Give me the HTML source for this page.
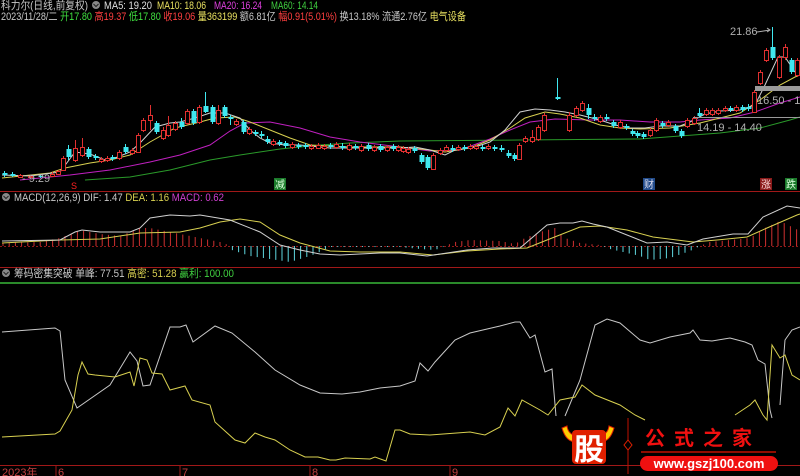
<!DOCTYPE html>
<html><head><meta charset="utf-8"><style>
html,body{margin:0;padding:0;background:#000;width:800px;height:476px;overflow:hidden}
svg{display:block}
text{font-family:"Liberation Sans","Noto Sans CJK SC",sans-serif}
</style></head><body>
<svg id="s" width="800" height="476" viewBox="0 0 800 476" xmlns="http://www.w3.org/2000/svg">
<rect width="800" height="476" fill="#000"/>
<!-- header -->
<g font-size="11">
<text x="1" y="9" fill="#c8c8c8" textLength="87" lengthAdjust="spacingAndGlyphs">科力尔(日线,前复权)</text>
<circle cx="96" cy="5" r="4" fill="#888"/><path d="M93.5 4l2.5 2.5 2.5-2.5" stroke="#222" fill="none"/>
<text x="104" y="9" fill="#e0e0e0" textLength="48" lengthAdjust="spacingAndGlyphs">MA5: 19.20</text>
<text x="157" y="9" fill="#e8e060" textLength="49" lengthAdjust="spacingAndGlyphs">MA10: 18.06</text>
<text x="214" y="9" fill="#e040e0" textLength="48" lengthAdjust="spacingAndGlyphs">MA20: 16.24</text>
<text x="271" y="9" fill="#40d040" textLength="47" lengthAdjust="spacingAndGlyphs">MA60: 14.14</text>
<text x="1" y="20" fill="#c8c8c8" textLength="465" lengthAdjust="spacingAndGlyphs">2023/11/28/二 <tspan fill="#40e040">开17.80 </tspan><tspan fill="#ff4040">高19.37 </tspan><tspan fill="#40e040">低17.80 </tspan><tspan fill="#ff4040">收19.06 </tspan><tspan fill="#e8e060">量363199 </tspan><tspan fill="#c8c8c8">额6.81亿 </tspan><tspan fill="#ff4040">幅0.91(5.01%) </tspan><tspan fill="#c8c8c8">换13.18% 流通2.76亿 </tspan><tspan fill="#e8e060">电气设备</tspan></text>
</g>
<!-- dividers -->
<line x1="0" y1="191.5" x2="800" y2="191.5" stroke="#a01818"/>
<line x1="0" y1="267.5" x2="800" y2="267.5" stroke="#a01818"/>
<line x1="0" y1="465.5" x2="800" y2="465.5" stroke="#a01818"/>
<line x1="0" y1="246.5" x2="800" y2="246.5" stroke="#901818" stroke-dasharray="2,2"/>
<line x1="0" y1="283" x2="800" y2="283" stroke="#2a8a2a" stroke-width="2"/>
<!-- MA lines -->
<g fill="none" stroke-width="1">
<polyline stroke="#2a9a2a" points="85,180 130,177 170,170 210,160 240,155 280,149 320,145 350,143 400,141 520,140 640,139 720,133 760,128 790,120 800,117"/>
<polyline stroke="#c020c0" points="20,180 40,178 70,175 110,170 150,162 180,155 210,145 230,131 245,123 270,122 300,128 330,137 360,142 400,147 430,151 460,150 490,139 510,130 530,122 555,119 590,120 620,120 650,122 680,122 700,120 730,118 755,112 780,103 800,97"/>
<polyline stroke="#d8d050" points="2,178 50,173 65,168 90,163 110,160 130,155 150,142 175,128 200,122 215,118 235,117 250,122 270,130 290,138 310,145 350,147 400,147 430,150 445,152 470,148 490,140 510,128 525,118 545,112 560,114 580,118 600,125 620,128 640,129 670,128 700,123 720,118 740,113 760,100 780,85 795,77 800,75"/>
<polyline stroke="#d0d0d0" points="2,175 30,176 60,172 75,152 90,154 105,160 115,158 130,152 140,143 155,127 170,123 180,122 195,118 210,113 225,113 240,118 250,130 260,138 270,143 285,145 300,145 330,148 350,148 400,148 415,147 430,150 445,155 455,150 475,147 490,142 505,130 520,112 535,109 550,110 565,112 580,115 600,120 615,125 630,128 645,128 660,126 680,126 690,122 705,114 720,111 740,110 755,105 765,85 778,57 785,57 795,72 800,75"/>
</g>
<g id="candles"></g>
<!-- annotations -->
<rect x="755" y="86" width="45" height="5" fill="#9a9a9a"/>
<line x1="693" y1="117.5" x2="800" y2="117.5" stroke="#9a9a9a"/>
<g font-size="11" fill="#b0b0b0">
<text x="730" y="35">21.86</text>
<text x="757" y="104">16.50 - 17</text>
<text x="697" y="131">14.19 - 14.40</text>
<text x="22" y="182">- 9.29</text>
</g>
<path d="M757 32 L770 30" stroke="#b0b0b0"/><path d="M767 28l3 2-3 2" stroke="#b0b0b0" fill="none"/>
<text x="71" y="189" font-size="9" fill="#ff2020">S</text>
<rect x="274" y="178" width="12" height="12" fill="#1a7a2a"/><text x="275" y="188" font-size="10" fill="#dfd">减</text>
<rect x="643" y="178" width="12" height="12" fill="#204a8a"/><text x="644" y="188" font-size="10" fill="#dde">财</text>
<rect x="760" y="178" width="12" height="12" fill="#8a1a1a"/><text x="761" y="188" font-size="10" fill="#fdd">涨</text>
<rect x="785" y="178" width="12" height="12" fill="#1a7a2a"/><text x="786" y="188" font-size="10" fill="#dfd">跌</text>
<!-- MACD header -->
<circle cx="6" cy="197" r="4" fill="#888"/><path d="M3.5 196l2.5 2.5 2.5-2.5" stroke="#222" fill="none"/>
<text x="14" y="201" font-size="11" fill="#c8c8c8" textLength="210" lengthAdjust="spacingAndGlyphs">MACD(12,26,9) DIF: 1.47 <tspan fill="#d8d050">DEA: 1.16 </tspan><tspan fill="#d040d0">MACD: 0.62</tspan></text>
<g id="hist"></g>
<g fill="none">
<polyline stroke="#d8d050" points="2,243 60,240 100,239 140,233 180,232 200,228 220,222 240,219 260,222 280,235 300,243 330,251 360,252 400,252 433,255 467,251 500,249 527,248 547,240 580,227 600,226 627,230 653,237 693,242 717,240 747,237 767,228 797,215 800,214"/>
<polyline stroke="#d0d0d0" points="2,241 60,240 75,232 82,230 100,232 130,232 140,228 150,218 170,215 190,216 200,215 230,220 260,232 280,245 300,250 320,254 340,255 380,253 400,253 427,256 467,250 493,248 520,248 547,225 560,223 573,223 582,221 593,224 607,227 627,235 647,243 667,242 687,245 703,239 733,234 748,234 763,217 787,206 800,208"/>
</g>
<!-- third panel header -->
<circle cx="6" cy="273" r="4" fill="#888"/><path d="M3.5 272l2.5 2.5 2.5-2.5" stroke="#222" fill="none"/>
<text x="14" y="277" font-size="11" fill="#c8c8c8" textLength="220" lengthAdjust="spacingAndGlyphs">筹码密集突破 单峰: 77.51 <tspan fill="#d8d050">高密: 51.28 </tspan><tspan fill="#40d040">赢利: 100.00</tspan></text>
<g fill="none">
<polyline stroke="#c8c8c8" points="2,332 55,328 60,331 65,380 77,408 110,385 130,352 137,361 143,386 150,385 170,327 180,327 186,325 193,342 215,326 232,333 255,352 275,370 300,385 320,393 342,394 360,392 380,388 400,386 415,381 420,363 428,371 435,362 455,340 470,333 500,326 515,322 520,322 530,338 535,335 545,372 552,369 556,416"/>
<polyline stroke="#c8c8c8" points="565,416 580,380 595,325 607,319 620,323 640,340 650,343 670,337 690,333 693,330 700,340 712,341 730,338 745,342 752,345 758,360 765,364 770,410 772,418"/>
<polyline stroke="#c8c8c8" points="780,405 785,340 792,330 800,327"/>
<polyline stroke="#d8d050" points="2,437 55,434 60,431 72,410 78,375 82,362 88,374 95,375 115,377 130,372 134,386 140,358 147,360 152,373 162,374 170,390 185,386 192,400 210,405 215,422 235,440 245,443 255,433 265,437 275,440 290,450 305,457 318,457 330,460 336,460 345,458 370,459 375,457 386,461 395,430 400,430 410,434 430,435 470,432 485,435 500,427 508,408 515,416 522,400 540,410 548,415 560,400 575,397 582,385 595,395 620,405 635,415 645,420"/>
<polyline stroke="#d8d050" points="735,415 750,405 755,400 763,415 767,420 772,345 780,358 785,355 792,375 800,380"/>
</g>
<!-- axis -->
<g font-size="11" fill="#c04040">
<text x="2" y="476">2023年</text><text x="58" y="476">6</text><text x="182" y="476">7</text><text x="312" y="476">8</text><text x="452" y="476">9</text>
</g>
<g stroke="#a01818"><line x1="56" y1="466" x2="56" y2="476"/><line x1="180" y1="466" x2="180" y2="476"/><line x1="310" y1="466" x2="310" y2="476"/><line x1="450" y1="466" x2="450" y2="476"/></g>
<!-- logo -->
<path d="M562 428 q4 14 14 14 l0 -6 q-8 -2 -9 -10 z" fill="#ffcc00" stroke="#e02000"/>
<path d="M614 428 q-4 14 -14 14 l0 -6 q8 -2 9 -10 z" fill="#ffcc00" stroke="#e02000"/>
<rect x="572" y="430" width="34" height="34" rx="4" fill="#e02000"/>
<text x="589" y="460" font-size="30" font-weight="bold" fill="#fff" text-anchor="middle" font-family="Noto Sans CJK SC,sans-serif">股</text>
<line x1="628" y1="418" x2="628" y2="474" stroke="#c01000"/>
<path d="M628 440 l4 5 -4 5 -4 -5z" fill="#000" stroke="#e02000"/>
<text x="645" y="445" font-size="20" font-weight="bold" fill="#f01010" letter-spacing="9" font-family="Noto Serif CJK SC,serif">公式之家</text>
<line x1="641" y1="452" x2="776" y2="452" stroke="#c01000" stroke-width="1.5"/>
<rect x="640" y="456" width="138" height="15" rx="7.5" fill="#f01010"/>
<text x="709" y="468" font-size="13" font-weight="bold" fill="#fff" text-anchor="middle">www.gszj100.com</text>
</svg>
<script>
var NS="http://www.w3.org/2000/svg";
function el(p,t,a){var e=document.createElementNS(NS,t);for(var k in a)e.setAttribute(k,a[k]);p.appendChild(e);return e;}
var R="#e03030",C="#40e8f0";
var c=[[4,173,175,171,177,0],[12,174,176,172,177,0],[20,175,177,174,178,1],[30,176,177,175,178,1],[40,176,177,175,178,0],[52,174,176,172,177,1],[58,171,174,170,175,1],[63,158,170,156,171,1],[68,149,157,145,160,0],[75,148,160,140,162,1],[82,147,155,138,157,1],[88,149,157,147,159,0],[95,156,158,154,160,0],[101,159,161,157,163,1],[107,158,160,156,162,1],[112,157,159,155,161,0],[119,152,158,150,160,1],[125,147,152,144,154,0],[132,150,153,148,155,1],[138,135,152,133,153,1],[143,120,130,118,132,1],[150,115,120,105,130,1],[156,123,132,121,134,0],[163,130,138,127,140,1],[168,125,135,116,137,1],[175,123,129,121,131,1],[181,122,127,118,129,0],[187,111,123,109,125,1],[193,111,123,109,125,0],[199,107,122,105,124,1],[205,106,112,92,113,0],[212,107,122,105,124,0],[218,110,123,105,125,1],[224,107,116,105,118,0],[230,117,119,115,125,0],[236,121,124,119,126,1],[243,122,132,120,134,0],[249,129,133,127,135,1],[255,132,134,130,136,0],[261,134,136,131,138,0],[267,139,142,136,144,0],[273,141,144,139,146,1],[279,142,144,140,146,0],[285,143,146,141,148,0],[292,144,147,142,149,1],[298,145,147,143,149,0],[305,145,147,143,149,0],[311,146,148,144,150,1],[318,145,148,143,149,1],[324,146,148,144,150,1],[330,145,147,143,149,0],[336,144,147,142,149,1],[342,146,148,143,150,0],[349,145,149,143,151,1],[355,146,148,144,150,0],[361,146,150,144,152,1],[368,145,149,143,151,0],[374,147,150,145,152,1],[380,146,150,144,152,0],[387,147,150,145,152,1],[393,146,149,144,151,0],[398,147,150,145,152,1],[403,148,151,146,153,1],[408,149,152,147,154,1],[414,148,151,146,153,0],[421,155,162,153,164,0],[427,157,168,155,170,0],[433,155,169,153,170,1],[440,150,153,148,155,1],[446,147,150,145,152,1],[452,148,150,145,152,0],[458,147,149,145,151,1],[464,147,149,145,151,0],[470,146,148,144,150,1],[476,146,148,144,150,1],[482,147,149,145,151,0],[488,146,148,144,150,1],[494,147,149,145,151,0],[501,148,150,145,152,0],[508,153,156,150,158,0],[514,155,159,153,161,0],[519,145,159,143,160,1],[525,138,141,136,143,1],[532,137,141,130,143,1],[538,127,139,125,141,1],[544,115,130,113,132,1],[557,97,99,78,100,0],[569,115,130,112,132,1],[576,108,115,106,117,1],[582,103,110,101,112,1],[588,108,115,104,119,0],[594,117,119,114,121,0],[600,117,121,115,123,1],[606,117,119,114,121,0],[613,122,126,120,128,0],[620,122,127,120,129,1],[626,126,128,124,130,0],[632,131,134,129,136,0],[637,133,136,131,138,0],[643,134,137,132,139,0],[650,130,135,128,137,1],[656,120,130,118,132,1],[662,123,126,121,128,0],[668,122,125,120,127,1],[675,126,131,124,133,0],[681,131,136,129,138,0],[687,120,126,118,128,1],[694,118,123,116,125,1],[699,113,116,108,118,0],[706,110,114,108,116,1],[712,110,114,108,116,1],[718,110,113,108,115,1],[725,108,110,106,112,1],[730,108,110,106,112,0],[736,107,110,105,112,1],[742,107,110,105,112,0],[748,107,109,104,111,0],[754,92,112,90,113,1],[760,72,83,70,85,1],[766,50,60,48,62,1],[772,47,58,27,60,0],[779,57,77,55,79,1],[785,47,57,44,60,1],[791,60,72,58,74,0],[797,60,75,58,77,1]];
var g=document.getElementById("candles");
c.forEach(function(d){var col=d[5]?R:C;
el(g,"line",{x1:d[0]+0.5,y1:d[3],x2:d[0]+0.5,y2:d[4],stroke:col});
if(d[5])el(g,"rect",{x:d[0]-1.5,y:d[1]+0.5,width:4,height:Math.max(1,d[2]-d[1]),fill:"#000",stroke:col});
else el(g,"rect",{x:d[0]-1.5,y:d[1],width:5,height:Math.max(1,d[2]-d[1]),fill:col});});
var k=[[0,-3],[40,-4],[60,-8],[80,-16],[100,-12],[120,-10],[140,-18],[150,-18],[170,-14],[200,-8],[225,-3],[232,4],[250,10],[270,13],[290,16],[310,10],[322,5],[330,1],[360,1],[400,1],[420,3],[435,4],[445,0],[455,-4],[470,-6],[500,-5],[515,-2],[525,-8],[540,-14],[555,-18],[565,-8],[580,-3],[600,-1],[610,3],[640,10],[650,14],[670,12],[690,5],[700,0],[710,-4],[730,-6],[750,-8],[765,-18],[780,-25],[790,-20],[800,-15]];
function v(x){for(var i=0;i<k.length-1;i++){if(x>=k[i][0]&&x<=k[i+1][0]){var t=(x-k[i][0])/(k[i+1][0]-k[i][0]);return k[i][1]+t*(k[i+1][1]-k[i][1]);}}return 0;}
var h=document.getElementById("hist");
for(var x=3;x<800;x+=6.2){var y=v(x);if(Math.abs(y)<0.6)continue;
el(h,"line",{x1:x,y1:246,x2:x,y2:246+y,stroke:y<0?"#d03030":"#60d8e0"});}
</script>
</body></html>
